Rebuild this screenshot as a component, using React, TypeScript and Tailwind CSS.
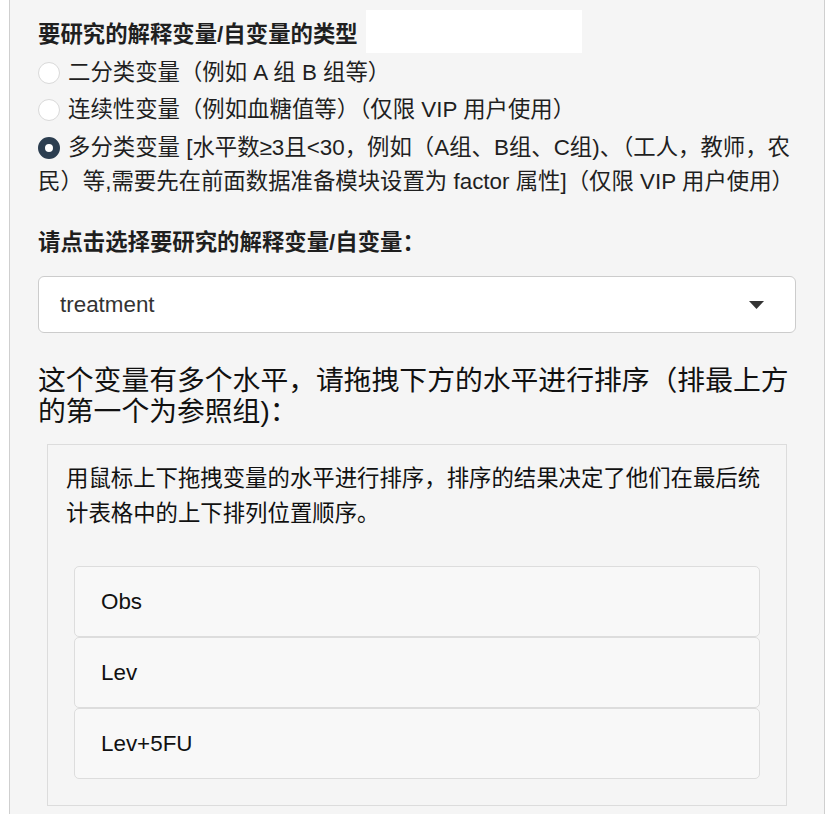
import React from "react";

function Radio({ checked }: { checked?: boolean }) {
  return checked ? (
    <span className="mr-[8px] inline-block h-[22px] w-[22px] rounded-full border-[7px] border-[#2c3e50] bg-white align-[-4px]" />
  ) : (
    <span className="mr-[8px] inline-block h-[22px] w-[22px] rounded-full border border-[#d9d9d9] bg-white align-[-4px]" />
  );
}

export default function App() {
  const levels = ["Obs", "Lev", "Lev+5FU"];

  return (
    <div className="min-h-[814px] bg-white font-['Liberation_Sans','Noto_Sans_CJK_SC',sans-serif] text-[#1f1f1f]">
      <div className="ml-[9px] min-h-[814px] w-[816px] border-x border-[#cfcfcf] bg-[#f5f5f5] px-[28px] pb-[20px] pt-[10px]">
        {/* variable type */}
        <div className="flex items-start">
          <div className="mt-[13px] text-[22.4px] font-bold leading-[24px]">要研究的解释变量/自变量的类型</div>
          <div className="ml-[8px] h-[43px] w-[216px] bg-white" />
        </div>

        <div className="mt-[3px] text-[22.4px] leading-[34px]">
          <Radio />二分类变量（例如 A 组 B 组等）
        </div>
        <div className="mt-[3px] text-[22.4px] leading-[34px]">
          <Radio />连续性变量（例如血糖值等）（仅限 VIP 用户使用）
        </div>
        <div className="mt-[4px] whitespace-nowrap text-[22.4px] leading-[34px]">
          <Radio checked />多分类变量 [水平数≥3且&lt;30，例如（A组、B组、C组)、（工人，教师，农
          <br />
          民）等,需要先在前面数据准备模块设置为 factor 属性]（仅限 VIP 用户使用）
        </div>

        {/* select */}
        <div className="mt-[33px] text-[22.4px] font-bold leading-[22px]">请点击选择要研究的解释变量/自变量：</div>
        <div className="mt-[22px] flex h-[57px] items-center justify-between rounded-[6px] border border-[#cccccc] bg-white pl-[21px] pr-[31px]">
          <span className="text-[22.4px] text-[#333]">treatment</span>
          <svg width="15" height="8" viewBox="0 0 15 8">
            <polygon points="0,0 15,0 7.5,8" fill="#333" />
          </svg>
        </div>

        {/* levels */}
        <div className="mt-[32px] text-[27.8px] leading-[31px] text-[#111]">
          这个变量有多个水平，请拖拽下方的水平进行排序（排最上方
          <br />
          的第一个为参照组)：
        </div>

        <div className="mx-[9px] mt-[17px] border border-[#dcdcdc] px-[18px] pb-[26px] pt-[16px]">
          <div className="text-[22.4px] leading-[35px] text-[#111]">
            用鼠标上下拖拽变量的水平进行排序，排序的结果决定了他们在最后统计表格中的上下排列位置顺序。
          </div>
          <div className="mx-[8px] mt-[35px] flex flex-col">
            {levels.map((lv) => (
              <div
                key={lv}
                className="flex h-[71px] items-center rounded-[5px] border border-[#dddddd] bg-[#f8f8f8] pl-[26px] text-[22.4px] text-[#111]"
              >
                {lv}
              </div>
            ))}
          </div>
        </div>
      </div>
    </div>
  );
}
